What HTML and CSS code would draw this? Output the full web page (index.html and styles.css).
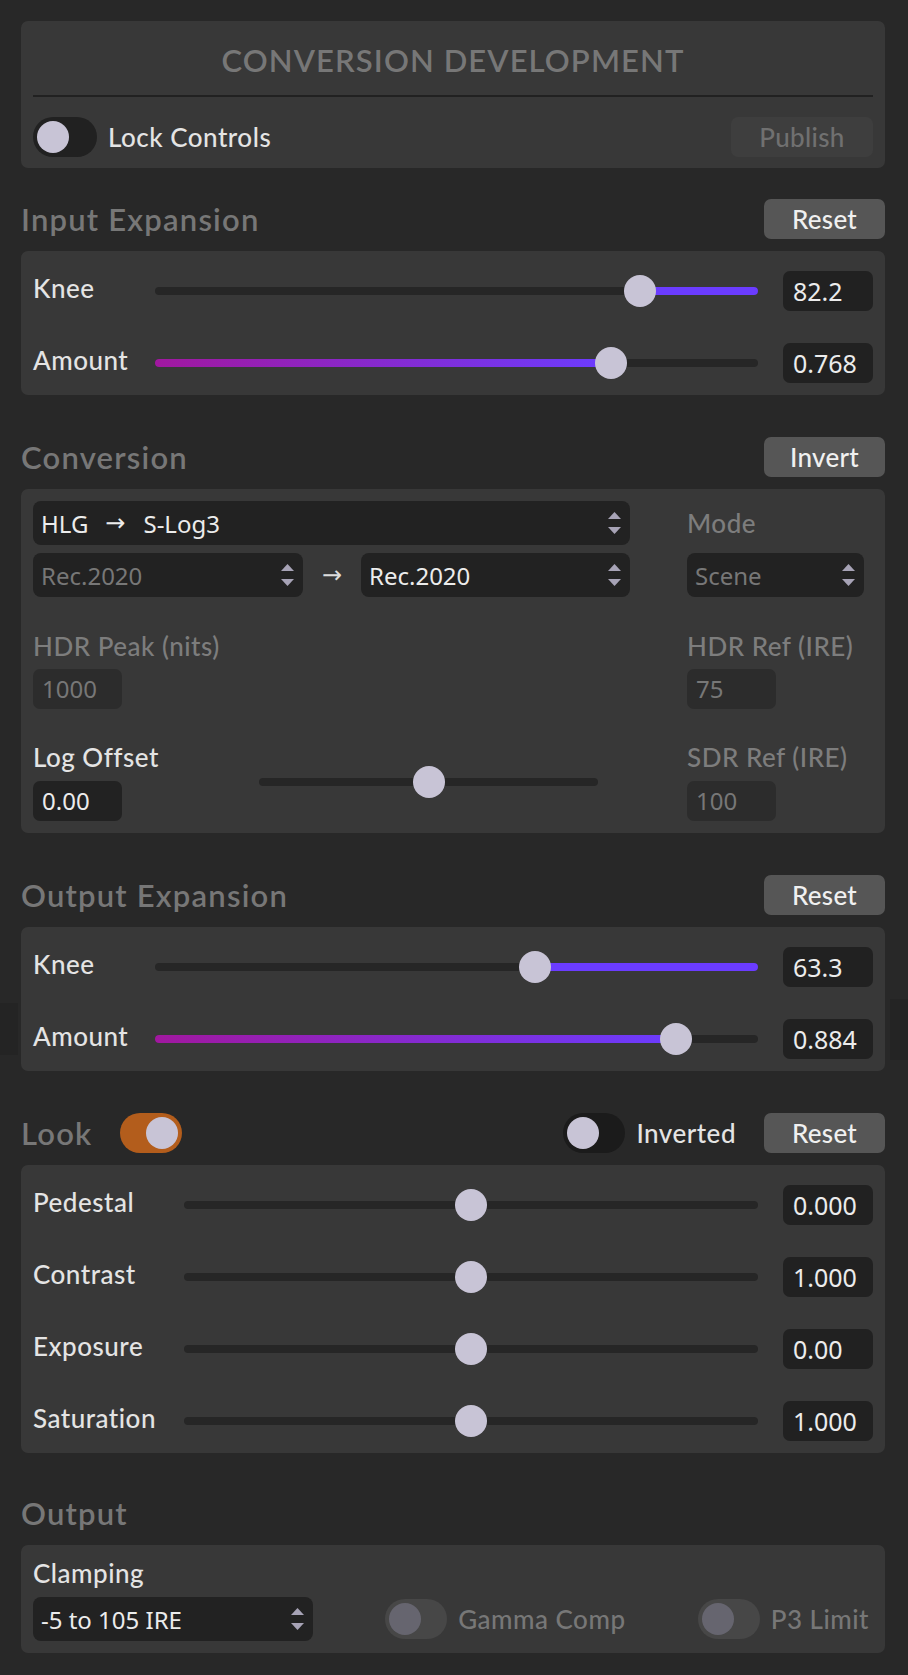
FILE: index.html
```html
<!DOCTYPE html>
<html lang="en">
<head>
<meta charset="utf-8">
<title>Conversion Development</title>
<link rel="stylesheet" href="styles.css">
</head>
<body>
<div class="edge edge-left"></div>
<div class="edge edge-right"></div>
<div class="app">

  <section class="card header">
    <div class="title">CONVERSION DEVELOPMENT</div>
    <div class="header-row">
      <div class="tgl-group">
        <span class="toggle toggle-lock"><span class="knob"></span></span>
        <span class="lbl">Lock Controls</span>
      </div>
      <button class="btn btn-publish">Publish</button>
    </div>
  </section>

  <div class="section-head first">
    <h2>Input Expansion</h2>
    <button class="btn">Reset</button>
  </div>
  <section class="card sliders">
    <div class="srow">
      <span class="lbl">Knee</span>
      <div class="slider fill-right" style="--v:0.822"><div class="track"></div><div class="fill"></div><div class="thumb"></div></div>
      <span class="val">82.2</span>
    </div>
    <div class="srow">
      <span class="lbl">Amount</span>
      <div class="slider fill-left" style="--v:0.771"><div class="track"></div><div class="fill"></div><div class="thumb"></div></div>
      <span class="val">0.768</span>
    </div>
  </section>

  <div class="section-head">
    <h2>Conversion</h2>
    <button class="btn">Invert</button>
  </div>
  <section class="card conv">
    <div class="conv-col conv-left">
      <div class="select">
        <span class="sel-text">HLG<span class="arr">→</span>S-Log3</span>
        <svg class="spin" viewBox="0 0 13 22" width="13" height="22"><polygon points="0,7 6.5,0 13,7"/><polygon points="0,15 6.5,22 13,15"/></svg>
      </div>
      <div class="rec-row">
        <div class="select dis">
          <span class="sel-text">Rec.2020</span>
          <svg class="spin" viewBox="0 0 13 22" width="13" height="22"><polygon points="0,7 6.5,0 13,7"/><polygon points="0,15 6.5,22 13,15"/></svg>
        </div>
        <span class="arr2">→</span>
        <div class="select">
          <span class="sel-text">Rec.2020</span>
          <svg class="spin" viewBox="0 0 13 22" width="13" height="22"><polygon points="0,7 6.5,0 13,7"/><polygon points="0,15 6.5,22 13,15"/></svg>
        </div>
      </div>
      <div class="flabel dim gap-a">HDR Peak (nits)</div>
      <div class="num dis gap-b">1000</div>
      <div class="log-group gap-c">
        <div class="log-fields">
          <div class="flabel">Log Offset</div>
          <div class="num gap-d">0.00</div>
        </div>
        <div class="slider" style="--v:0.5"><div class="track"></div><div class="thumb"></div></div>
      </div>
    </div>
    <div class="conv-col conv-right">
      <div class="flabel dim mode">Mode</div>
      <div class="select dis scene">
        <span class="sel-text">Scene</span>
        <svg class="spin" viewBox="0 0 13 22" width="13" height="22"><polygon points="0,7 6.5,0 13,7"/><polygon points="0,15 6.5,22 13,15"/></svg>
      </div>
      <div class="flabel dim gap-a">HDR Ref (IRE)</div>
      <div class="num dis gap-b">75</div>
      <div class="flabel dim gap-c">SDR Ref (IRE)</div>
      <div class="num dis gap-d">100</div>
    </div>
  </section>

  <div class="section-head">
    <h2>Output Expansion</h2>
    <button class="btn">Reset</button>
  </div>
  <section class="card sliders">
    <div class="srow">
      <span class="lbl">Knee</span>
      <div class="slider fill-right" style="--v:0.637"><div class="track"></div><div class="fill"></div><div class="thumb"></div></div>
      <span class="val">63.3</span>
    </div>
    <div class="srow">
      <span class="lbl">Amount</span>
      <div class="slider fill-left" style="--v:0.885"><div class="track"></div><div class="fill"></div><div class="thumb"></div></div>
      <span class="val">0.884</span>
    </div>
  </section>

  <div class="section-head">
    <div class="head-left">
      <h2>Look</h2>
      <span class="toggle toggle-on"><span class="knob"></span></span>
    </div>
    <div class="head-right">
      <span class="toggle toggle-dark"><span class="knob"></span></span>
      <span class="lbl">Inverted</span>
      <button class="btn">Reset</button>
    </div>
  </div>
  <section class="card sliders look">
    <div class="srow">
      <span class="lbl">Pedestal</span>
      <div class="slider" style="--v:0.5"><div class="track"></div><div class="thumb"></div></div>
      <span class="val">0.000</span>
    </div>
    <div class="srow">
      <span class="lbl">Contrast</span>
      <div class="slider" style="--v:0.5"><div class="track"></div><div class="thumb"></div></div>
      <span class="val">1.000</span>
    </div>
    <div class="srow">
      <span class="lbl">Exposure</span>
      <div class="slider" style="--v:0.5"><div class="track"></div><div class="thumb"></div></div>
      <span class="val">0.00</span>
    </div>
    <div class="srow">
      <span class="lbl">Saturation</span>
      <div class="slider" style="--v:0.5"><div class="track"></div><div class="thumb"></div></div>
      <span class="val">1.000</span>
    </div>
  </section>

  <div class="section-head out-head">
    <h2>Output</h2>
  </div>
  <section class="card out">
    <div class="flabel">Clamping</div>
    <div class="out-row">
      <div class="select clamp">
        <span class="sel-text">-5 to 105 IRE</span>
        <svg class="spin" viewBox="0 0 13 22" width="13" height="22"><polygon points="0,7 6.5,0 13,7"/><polygon points="0,15 6.5,22 13,15"/></svg>
      </div>
      <div class="tgl-group dis-group">
        <span class="toggle toggle-dis"><span class="knob"></span></span>
        <span class="lbl">Gamma Comp</span>
      </div>
      <div class="tgl-group dis-group">
        <span class="toggle toggle-dis"><span class="knob"></span></span>
        <span class="lbl">P3 Limit</span>
      </div>
    </div>
  </section>

</div>
</body>
</html>
```

FILE: styles.css
```css
* { box-sizing: border-box; }

html, body {
  margin: 0;
  padding: 0;
  background: #282828;
}

body {
  font-family: Lato, "Open Sans", sans-serif;
  color: #e4e4e4;
  width: 908px;
  min-height: 1675px;
  overflow: hidden;
}

.edge {
  position: fixed;
  width: 18px;
  background: #242424;
}
.edge-left { left: 0; top: 1003px; height: 52px; }
.edge-right { right: 0; top: 999px; height: 61px; }

.app {
  width: 885px;
  padding: 21px 0 0 21px;
}

.card {
  background: #383838;
  border-radius: 7px;
}

/* ---------- header card ---------- */
.header {
  padding: 0 12px;
  height: 147px;
}

.title {
  padding-top: 4px;
  height: 76px;
  line-height: 70px;
  text-align: center;
  font-size: 31px;
  font-weight: 600;
  letter-spacing: 1.1px;
  color: #777777;
  border-bottom: 2px solid #212121;
}

.header-row {
  display: flex;
  align-items: center;
  justify-content: space-between;
  padding-top: 20px;
}

.tgl-group {
  display: flex;
  align-items: center;
  gap: 11px;
}

.lbl {
  font-size: 26px;
  font-weight: 500;
  letter-spacing: 0.5px;
  color: #e4e4e4;
  white-space: nowrap;
}

.toggle {
  position: relative;
  display: inline-block;
  width: 62px;
  height: 40px;
  border-radius: 20px;
  background: #212121;
  flex: none;
}
.toggle-lock { width: 64px; }
.toggle .knob {
  position: absolute;
  top: 4px;
  left: 4px;
  width: 32px;
  height: 32px;
  border-radius: 50%;
  background: #c8c4d6;
}
.toggle-on { background: #b35d1c; }
.toggle-on .knob { left: 26px; }
.toggle-dark { background: #1b1b1b; }
.toggle-dis { background: #474747; }
.toggle-dis .knob { background: #66656f; }

.btn {
  font-family: Lato, "Open Sans", sans-serif;
  font-size: 26px;
  font-weight: 500;
  letter-spacing: 0.3px;
  color: #f0f0f0;
  background: #565656;
  border: none;
  border-radius: 7px;
  width: 121px;
  height: 40px;
  padding: 0;
  flex: none;
}
.btn-publish {
  width: 142px;
  background: #3e3e3e;
  color: #707070;
}

/* ---------- section heads ---------- */
.section-head {
  display: flex;
  align-items: center;
  justify-content: space-between;
  height: 40px;
  margin-top: 42px;
  margin-bottom: 12px;
}
.section-head.first { margin-top: 31px; }
.section-head.out-head { margin-top: 40px; }

.section-head h2 {
  margin: 0;
  font-size: 31px;
  font-weight: 600;
  letter-spacing: 1.2px;
  color: #777777;
}

.head-left {
  display: flex;
  align-items: center;
  gap: 28px;
}
.head-right {
  display: flex;
  align-items: center;
}
.head-right .lbl { margin-left: 11px; margin-right: 28px; }

/* ---------- slider cards ---------- */
.sliders {
  padding: 20px 12px 12px;
  display: flex;
  flex-direction: column;
  gap: 32px;
}

.srow {
  display: grid;
  grid-template-columns: 122px 1fr 90px;
  align-items: center;
  height: 40px;
}
.srow > .lbl { padding-bottom: 6px; }
.look .srow { grid-template-columns: 151px 1fr 90px; }
.srow .slider { margin-right: 25px; }

.val {
  height: 40px;
  line-height: 40px;
  padding-left: 10px;
  background: #212121;
  border-radius: 7px;
  font-family: "Noto Sans", "Open Sans", sans-serif;
  font-size: 25px;
  color: #ececec;
}

.slider {
  position: relative;
  height: 32px;
}
.slider .track,
.slider .fill {
  position: absolute;
  top: 12px;
  height: 8px;
  border-radius: 4px;
}
.slider .track {
  left: 0;
  right: 0;
  background: #262626;
}
.fill-right .fill {
  left: calc(16px + var(--v) * (100% - 32px));
  right: 0;
  background: #6b3cff;
}
.fill-left .fill {
  left: 0;
  width: calc(16px + var(--v) * (100% - 32px));
  background: linear-gradient(90deg, #a1189f, #6b3cff);
}
.slider .thumb {
  position: absolute;
  top: 0;
  left: calc(var(--v) * (100% - 32px));
  width: 32px;
  height: 32px;
  border-radius: 50%;
  background: #c8c4d6;
}

/* ---------- conversion card ---------- */
.conv {
  display: grid;
  grid-template-columns: 597px 177px;
  column-gap: 57px;
  padding: 12px 12px 12px;
}

.conv-col {
  display: flex;
  flex-direction: column;
  align-items: flex-start;
}

.select {
  position: relative;
  display: flex;
  align-items: center;
  justify-content: space-between;
  width: 100%;
  height: 44px;
  padding: 0 9px 0 8px;
  background: #222222;
  border-radius: 8px;
  font-family: "Noto Sans", "Open Sans", sans-serif;
  font-size: 24px;
  color: #ececec;
}
.select.dis { color: #777777; }
.sel-text { white-space: nowrap; display: flex; align-items: center; }
.arr {
  margin: 0 18px 0 17px;
  font-family: "DejaVu Sans", sans-serif;
  font-size: 24px;
}
.spin { fill: #a7a3b6; flex: none; }

.rec-row {
  display: flex;
  align-items: center;
  width: 100%;
  margin-top: 8px;
}
.rec-row .select { width: 270px; }
.rec-row .select + .arr2 + .select { width: 269px; }
.arr2 {
  width: 58px;
  text-align: center;
  font-family: "DejaVu Sans", sans-serif;
  font-size: 24px;
  color: #dcdcdc;
}

.flabel {
  height: 28px;
  line-height: 28px;
  font-size: 26px;
  font-weight: 500;
  letter-spacing: 0.5px;
  color: #e4e4e4;
  white-space: nowrap;
}
.flabel.dim { color: #7d7d7d; }
.flabel.mode { height: 44px; line-height: 44px; }

.scene { margin-top: 8px; }

.num {
  width: 89px;
  height: 40px;
  line-height: 40px;
  padding-left: 9px;
  background: #222222;
  border-radius: 7px;
  font-family: "Noto Sans", "Open Sans", sans-serif;
  font-size: 24px;
  color: #ececec;
}
.num.dis { background: #2c2c2c; color: #777777; }

.gap-a { margin-top: 35px; }
.gap-b { margin-top: 9px; }
.gap-c { margin-top: 34px; }
.gap-d { margin-top: 10px; }

.log-group {
  display: grid;
  grid-template-columns: 226px 339px;
  align-items: center;
  width: 100%;
}
.log-fields {
  display: flex;
  flex-direction: column;
}

/* ---------- output card ---------- */
.out {
  padding: 14px 12px 12px;
}
.out-row {
  display: flex;
  align-items: center;
  justify-content: space-between;
  margin-top: 10px;
  padding-right: 4px;
}
.select.clamp { width: 280px; }
.dis-group .lbl { color: #777777; }
```
